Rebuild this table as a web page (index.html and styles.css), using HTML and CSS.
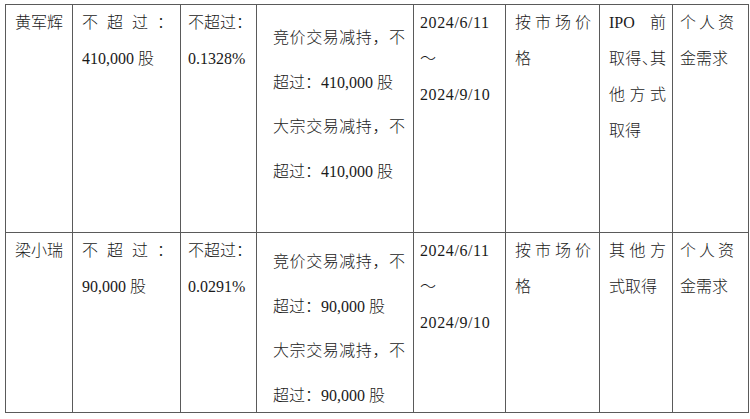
FILE: index.html
```html
<!DOCTYPE html>
<html lang="zh-CN">
<head>
<meta charset="utf-8">
<title>减持计划</title>
<link rel="stylesheet" href="styles.css">
</head>
<body>
<div class="sheet">
  <div class="cell c1">黄军辉</div>
  <div class="cell c2 just">不超过：410,000 股</div>
  <div class="cell c3 just">不超过：0.1328%</div>
  <div class="cell c4 r1 just">
    <div>竞价交易减持，不超过：410,000 股</div>
    <div>大宗交易减持，不超过：410,000 股</div>
  </div>
  <div class="cell c5">2024/6/11<br>～<br>2024/9/10</div>
  <div class="cell c6 just">按市场价格</div>
  <div class="cell c7 just">IPO前取得<span class="halt">、</span>其他方式取得</div>
  <div class="cell c8 just">个人资金需求</div>

  <div class="cell c1">梁小瑞</div>
  <div class="cell c2 just">不超过：90,000 股</div>
  <div class="cell c3 just">不超过：0.0291%</div>
  <div class="cell c4 r2 just">
    <div>竞价交易减持，不超过：90,000 股</div>
    <div>大宗交易减持，不超过：90,000 股</div>
  </div>
  <div class="cell c5">2024/6/11<br>～<br>2024/9/10</div>
  <div class="cell c6 just">按市场价格</div>
  <div class="cell c7 just">其他方式取得</div>
  <div class="cell c8 just">个人资金需求</div>
</div>
</body>
</html>
```

FILE: styles.css
```css
html, body {
  margin: 0;
  padding: 0;
  background: #ffffff;
}

body {
  font-family: "Liberation Serif", "Noto Sans CJK SC", serif;
  font-size: 16px;
  font-weight: 300;
  color: #1a1a1a;
}

.sheet {
  display: grid;
  grid-template-columns: 66px 107px 75px 156px 91px 93px 72px 75px;
  grid-template-rows: 227px 179px;
  gap: 1px;
  padding: 1px;
  background: #5a5a5a;
  width: max-content;
  margin: 4px 0 0 5px;
}

.cell {
  background: #ffffff;
  line-height: 36px;
  box-sizing: border-box;
  padding-top: 0;
  min-width: 0;
}

.just {
  text-align: justify;
}

.c1 { padding-left: 9px; padding-right: 9px; }
.c2 { padding-left: 9px; padding-right: 7px; }
.c3 { padding-left: 7px; padding-right: 4px; }
.c4 { padding-left: 16px; padding-right: 8px; line-height: 44.5px; }
.c4.r1 { padding-top: 11px; }
.c4.r2 { padding-top: 7px; }
.c5 { padding-left: 6px; letter-spacing: 0.6px; }
.c6 { padding-left: 9px; padding-right: 8px; }
.c7 { padding-left: 9px; padding-right: 6px; }
.c8 { padding-left: 7px; padding-right: 14px; }

.halt {
  font-feature-settings: "halt" 1;
}
```
